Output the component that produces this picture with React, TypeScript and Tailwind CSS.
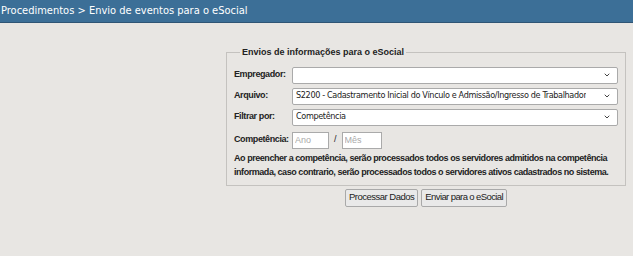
import { ChevronDown } from 'lucide-react'

function FakeSelect({ value }: { value: string }) {
  return (
    <div className="flex-1 min-w-0 h-[17px] flex items-center justify-between bg-white border border-[#aaa] rounded-[2px] pl-[3px] pr-[6px]">
      <span className="text-[9px] text-[#222] font-['DejaVu_Sans_Condensed',sans-serif] tracking-[-0.35px] truncate">
        {value}
      </span>
      <ChevronDown className="w-[8px] h-[8px] text-[#444] shrink-0" strokeWidth={3} />
    </div>
  )
}

function Row({ label, value }: { label: string; value: string }) {
  return (
    <div className="flex items-center h-[21px]">
      <label className="w-[58px] shrink-0 font-bold text-[9px] tracking-[-0.4px] text-[#222]">{label}</label>
      <FakeSelect value={value} />
    </div>
  )
}

export default function App() {
  return (
    <div className="min-h-screen bg-[#e8e6e3] font-['Liberation_Sans',Arial,sans-serif]">
      {/* barra de titulo */}
      <div className="h-[23px] bg-[#3c6f97] border-b border-[#2f5575] flex items-center">
        <span className="text-white text-[11px] font-['DejaVu_Sans_Condensed',sans-serif] pl-[1px]">
          Procedimentos &gt; Envio de eventos para o eSocial
        </span>
      </div>

      <div className="ml-[226px] w-[400px] pt-[23px]">
        <fieldset className="border border-[#c4c2bf] pl-[7px] pr-[7px] pb-[6px]">
          <legend className="ml-[6px] px-[2px] font-bold text-[9px] text-[#222]">
            Envios de informações para o eSocial
          </legend>
          <div className="pt-[5px]">
            <Row label="Empregador:" value="" />
            <Row label="Arquivo:" value="S2200 - Cadastramento Inicial do Vínculo e Admissão/Ingresso de Trabalhador" />
            <Row label="Filtrar por:" value="Competência" />
            <div className="flex items-center h-[21px] mt-[2px]">
              <label className="w-[58px] shrink-0 font-bold text-[9px] tracking-[-0.4px] text-[#222]">Competência:</label>
              <input
                placeholder="Ano"
                className="w-[37px] h-[17px] bg-white border border-[#aaa] text-[9px] px-[2px] placeholder:text-[#aaa] outline-none"
              />
              <span className="text-[9px] mx-[5px] text-[#222]">/</span>
              <input
                placeholder="Mês"
                className="w-[40px] h-[17px] bg-white border border-[#aaa] text-[9px] px-[2px] placeholder:text-[#aaa] outline-none"
              />
            </div>
            <p className="font-bold text-[9px] tracking-[-0.45px] leading-[14px] text-[#222] whitespace-nowrap">
              Ao preencher a competência, serão processados todos os servidores admitidos na competência
              <br />
              informada, caso contrario, serão processados todos o servidores ativos cadastrados no sistema.
            </p>
          </div>
        </fieldset>

        <div className="flex justify-center gap-[3px] mt-[3px]">
          <button className="h-[18px] px-[3px] text-[9.5px] tracking-[-0.5px] text-[#222] bg-[#e9e9e9] border border-[#a9a9a9] rounded-[2px]">
            Processar Dados
          </button>
          <button className="h-[18px] px-[3px] text-[9.5px] tracking-[-0.6px] text-[#222] bg-[#e9e9e9] border border-[#a9a9a9] rounded-[2px]">
            Enviar para o eSocial
          </button>
        </div>
      </div>
    </div>
  )
}
